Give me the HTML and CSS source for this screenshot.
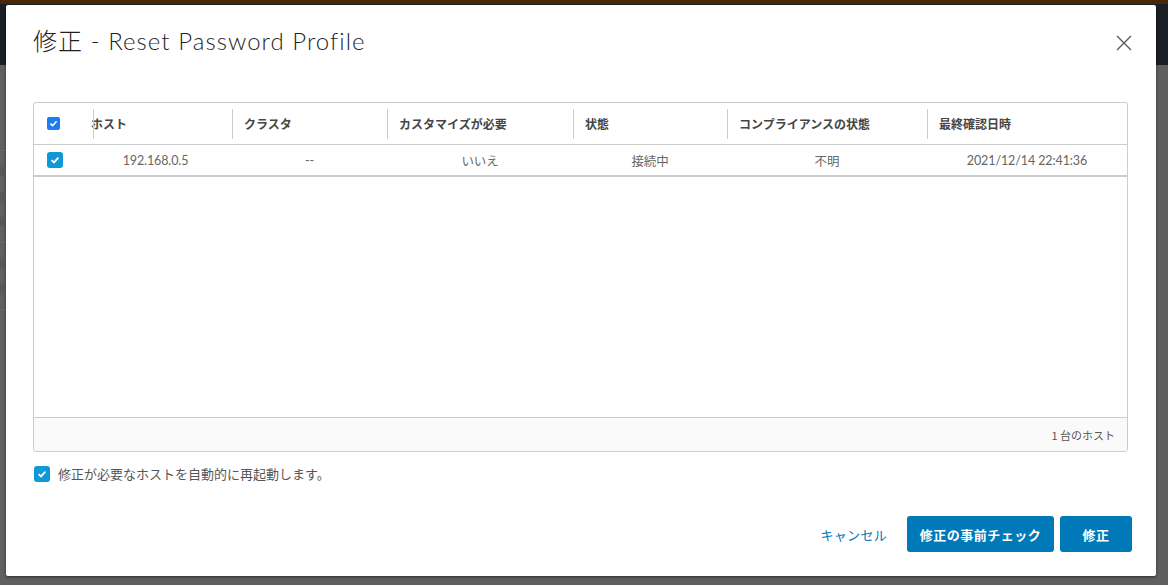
FILE: index.html
```html
<!DOCTYPE html>
<html lang="ja">
<head>
<meta charset="utf-8">
<link rel="stylesheet" href="styles.css">
</head>
<body>
<div class="page">
  <div class="topstripe"></div>
  <div class="appheader"></div>
  <div class="appbody">
    <div class="side">
      <div class="side-line"></div>
      <div class="side-mark"></div>
      <div class="side-mark"></div>
      <div class="side-mark"></div>
      <div class="side-line"></div>
      <div class="side-mark"></div>
      <div class="side-mark"></div>
      <div class="side-line"></div>
    </div>
  </div>
</div>

<div class="modal">
  <div class="modal-head">
    <h1 class="modal-title">修正 - Reset Password Profile</h1>
    <button class="close" aria-label="close">
      <svg width="16" height="16" viewBox="0 0 16 16"><path d="M1 1 L15 15 M15 1 L1 15" stroke="#5a5a5a" stroke-width="1.4" fill="none"/></svg>
    </button>
  </div>

  <div class="grid">
    <div class="grid-head">
      <div class="c c-sel"><span class="cb cb-head"><svg viewBox="0 0 12 12"><path d="M2.6 6.2 L5 8.4 L9.4 3.6" stroke="#fff" stroke-width="1.8" fill="none"/></svg></span></div>
      <div class="c c-host hc sep-in">ホスト</div>
      <div class="c c-clu hc sep">クラスタ</div>
      <div class="c c-cus hc sep">カスタマイズが必要</div>
      <div class="c c-st hc sep">状態</div>
      <div class="c c-comp hc sep">コンプライアンスの状態</div>
      <div class="c c-date hc sep">最終確認日時</div>
    </div>
    <div class="grid-row">
      <div class="c c-sel"><span class="cb cb-row"><svg viewBox="0 0 12 12"><path d="M2.6 6.2 L5 8.4 L9.4 3.6" stroke="#fff" stroke-width="1.8" fill="none"/></svg></span></div>
      <div class="c c-host dc">192.168.0.5</div>
      <div class="c c-clu dc">--</div>
      <div class="c c-cus dc">いいえ</div>
      <div class="c c-st dc">接続中</div>
      <div class="c c-comp dc">不明</div>
      <div class="c c-date dc">2021/12/14 22:41:36</div>
    </div>
    <div class="grid-body"></div>
    <div class="grid-foot">1 台のホスト</div>
  </div>

  <label class="opt">
    <span class="cb cb-row"><svg viewBox="0 0 12 12"><path d="M2.6 6.2 L5 8.4 L9.4 3.6" stroke="#fff" stroke-width="1.8" fill="none"/></svg></span>
    <span class="opt-text">修正が必要なホストを自動的に再起動します。</span>
  </label>

  <div class="modal-foot">
    <button class="btn-link">キャンセル</button>
    <button class="btn-primary wide">修正の事前チェック</button>
    <button class="btn-primary">修正</button>
  </div>
</div>
</body>
</html>
```

FILE: styles.css
```css
* { box-sizing: border-box; }
html, body { margin: 0; padding: 0; }
body {
  width: 1168px;
  height: 585px;
  overflow: hidden;
  font-family: "Noto Sans", "Noto Sans CJK JP", sans-serif;
  background: #5f5f5f;
}
.page {
  display: flex;
  flex-direction: column;
  height: 585px;
}
.topstripe { height: 4px; background: #4a2708; }
.appheader { height: 61px; background: #191f25; }
.appbody { flex: 1; background: #5f5f5f; display: flex; }
.side {
  width: 8px;
  display: flex;
  flex-direction: column;
  padding-top: 85px;
  gap: 16px;
  overflow: hidden;
}
.side-line { height: 1px; background: #6a6a6a; width: 8px; }
.side-mark { height: 9px; width: 4px; background: #505050; opacity: 0.5; }

.modal {
  position: absolute;
  left: 6px;
  top: 5px;
  width: 1150px;
  height: 571px;
  background: #fff;
  border-radius: 2px;
  box-shadow: 0 1px 3px rgba(0,0,0,0.5);
  padding: 15px 28px 24px 27px;
  display: flex;
  flex-direction: column;
}
.modal-head {
  display: flex;
  align-items: center;
  justify-content: space-between;
  height: 38px;
}
.modal-title {
  margin: 0;
  font-family: "Lato", "Noto Sans CJK JP", sans-serif;
  font-weight: 300;
  font-size: 24px;
  letter-spacing: 1.05px;
  color: #1f1f1f;
}
.close {
  border: 0;
  background: none;
  padding: 0;
  margin-right: -4px;
  margin-top: 7px;
  width: 16px;
  height: 16px;
  display: flex;
}

.grid {
  margin-top: 44px;
  height: 350px;
  border: 1px solid #cccccc;
  border-radius: 3px;
  display: flex;
  flex-direction: column;
  overflow: hidden;
}
.grid-head {
  height: 42px;
  display: flex;
  align-items: center;
  border-bottom: 1px solid #cccccc;
  flex: none;
}
.grid-row {
  height: 32px;
  display: flex;
  align-items: center;
  border-bottom: 2px solid #cccccc;
  flex: none;
}
.grid-body { flex: 1; }
.grid-foot {
  height: 34px;
  flex: none;
  background: #fafafa;
  border-top: 1px solid #cccccc;
  display: flex;
  align-items: center;
  justify-content: flex-end;
  padding-right: 12px;
  font-family: "Noto Sans CJK JP", sans-serif;
  font-size: 11px;
  color: #565656;
}

.c { height: 100%; display: flex; align-items: center; position: relative; flex: none; }
.c-sel { width: 45px; padding-left: 13px; }
.c-host { width: 153px; }
.c-clu { width: 155px; }
.c-cus { width: 186px; }
.c-st { width: 154px; }
.c-comp { width: 200px; }
.c-date { flex: 1; }

.hc {
  font-family: "Noto Sans CJK JP", sans-serif;
  font-size: 12px;
  font-weight: 700;
  color: #454545;
  padding-left: 12px;
}
.sep::before, .sep-in::before {
  content: "";
  position: absolute;
  top: 6px;
  bottom: 5px;
  width: 1px;
  background: #cccccc;
}
.sep::before { left: 0; }
.sep-in::before { left: 14px; }

.dc {
  justify-content: center;
  font-family: "Lato", "Noto Sans CJK JP", sans-serif;
  font-size: 12.5px;
  letter-spacing: -0.1px;
  color: #666666;
}

.cb {
  display: inline-flex;
  align-items: center;
  justify-content: center;
  border-radius: 3px;
  flex: none;
}
.cb svg { width: 12px; height: 12px; }
.cb-head { width: 13px; height: 13px; background: #1a7ef2; border-radius: 2px; }
.cb-head svg { width: 11px; height: 11px; }
.cb-row { width: 16px; height: 16px; background: #0f97d6; }

.opt {
  margin-top: 12px;
  display: flex;
  align-items: center;
  gap: 8px;
  padding-left: 1px;
}
.opt-text {
  font-family: "Noto Sans CJK JP", sans-serif;
  font-size: 13px;
  color: #565656;
}

.modal-foot {
  margin-top: auto;
  display: flex;
  justify-content: flex-end;
  align-items: center;
  gap: 6px;
  margin-right: -4px;
}
.btn-link {
  border: 0;
  background: none;
  font-family: "Noto Sans CJK JP", sans-serif;
  font-size: 13px;
  letter-spacing: 0.3px;
  color: #0079b8;
  padding: 0 12px;
  margin-right: 2px;
  height: 36px;
}
.btn-primary {
  border: 0;
  background: #0079b8;
  color: #fff;
  border-radius: 3px;
  height: 36px;
  width: 72px;
  font-family: "Noto Sans CJK JP", sans-serif;
  font-weight: 700;
  font-size: 13px;
  letter-spacing: 0.5px;
}
.btn-primary.wide { width: 147px; }
```
